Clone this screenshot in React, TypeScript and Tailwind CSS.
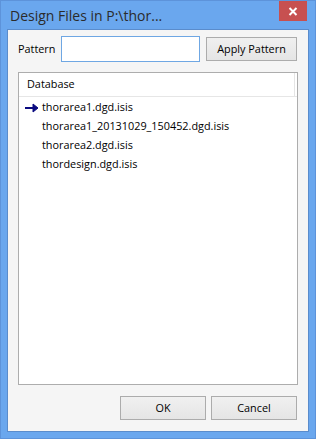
import React from "react";

const files = [
  "thorarea1.dgd.isis",
  "thorarea1_20131029_150452.dgd.isis",
  "thorarea2.dgd.isis",
  "thordesign.dgd.isis",
];

function Btn({ children, className }: { children: React.ReactNode; className: string }) {
  return (
    <button
      className={
        "flex h-[24px] items-center justify-center border border-[#acacac] bg-gradient-to-b from-[#f0f0f0] to-[#e5e5e5] text-[10.85px] text-black " +
        className
      }
    >
      {children}
    </button>
  );
}

export default function App() {
  return (
    <div className="flex h-[439px] w-[316px] flex-col border border-[#5d93da] bg-[#6aa7ee] px-[6px] pb-[6px] font-['Open_Sans',sans-serif]">
      {/* title bar */}
      <div className="flex h-[28px] shrink-0 items-start">
        <div className="mt-[6px] pl-[3px] text-[14px] leading-[18px] text-[#2b2b2b]">Design Files in P:\thor...</div>
        <div className="ml-auto mr-[2px] flex h-[20px] w-[28px] items-center justify-center bg-[#c75050]">
          <svg width="10" height="9" viewBox="0 0 10 9">
            <path d="M1.5 1 L8.5 8 M8.5 1 L1.5 8" stroke="#fff" strokeWidth="2" />
          </svg>
        </div>
      </div>
      {/* client area */}
      <div className="flex flex-1 flex-col border border-[#5a8ccc] bg-[#f5f5f5] pl-[10px] pr-[10px] pt-[6px] text-[10.85px] text-black">
        <div className="flex h-[26px] items-center">
          <span className="w-[43px]">Pattern</span>
          <div className="h-[26px] w-[139px] border border-[#6fa7e3] bg-white" />
          <Btn className="ml-[6px] w-[91px]">Apply Pattern</Btn>
        </div>
        <div className="mt-[10px] flex h-[313px] flex-col border border-[#adadad] bg-white">
          <div className="flex h-[24px] border-b border-[#e6e6e6]">
            <div className="flex flex-1 items-center border-r border-[#e5e5e5] pl-[8px]">Database</div>
            <div className="w-[2px]" />
          </div>
          <div className="flex flex-col pt-[1px]">
            {files.map((f, i) => (
              <div key={f} className="flex h-[19px] items-center">
                <div className="flex w-[23px] justify-end pr-[3px]">
                  {i === 0 && (
                    <svg width="14" height="10" viewBox="0 0 14 10">
                      <path d="M0 5 H11" stroke="#0a0a80" strokeWidth="2" />
                      <path d="M8 1 L13 5 L8 9 Z" fill="#0a0a80" stroke="#0a0a80" strokeWidth="1" strokeLinejoin="miter" />
                    </svg>
                  )}
                </div>
                <span>{f}</span>
              </div>
            ))}
          </div>
        </div>
        <div className="mt-[11px] flex justify-end gap-[5px] pr-[1px]">
          <Btn className="w-[86px]">OK</Btn>
          <Btn className="w-[86px]">Cancel</Btn>
        </div>
      </div>
    </div>
  );
}
